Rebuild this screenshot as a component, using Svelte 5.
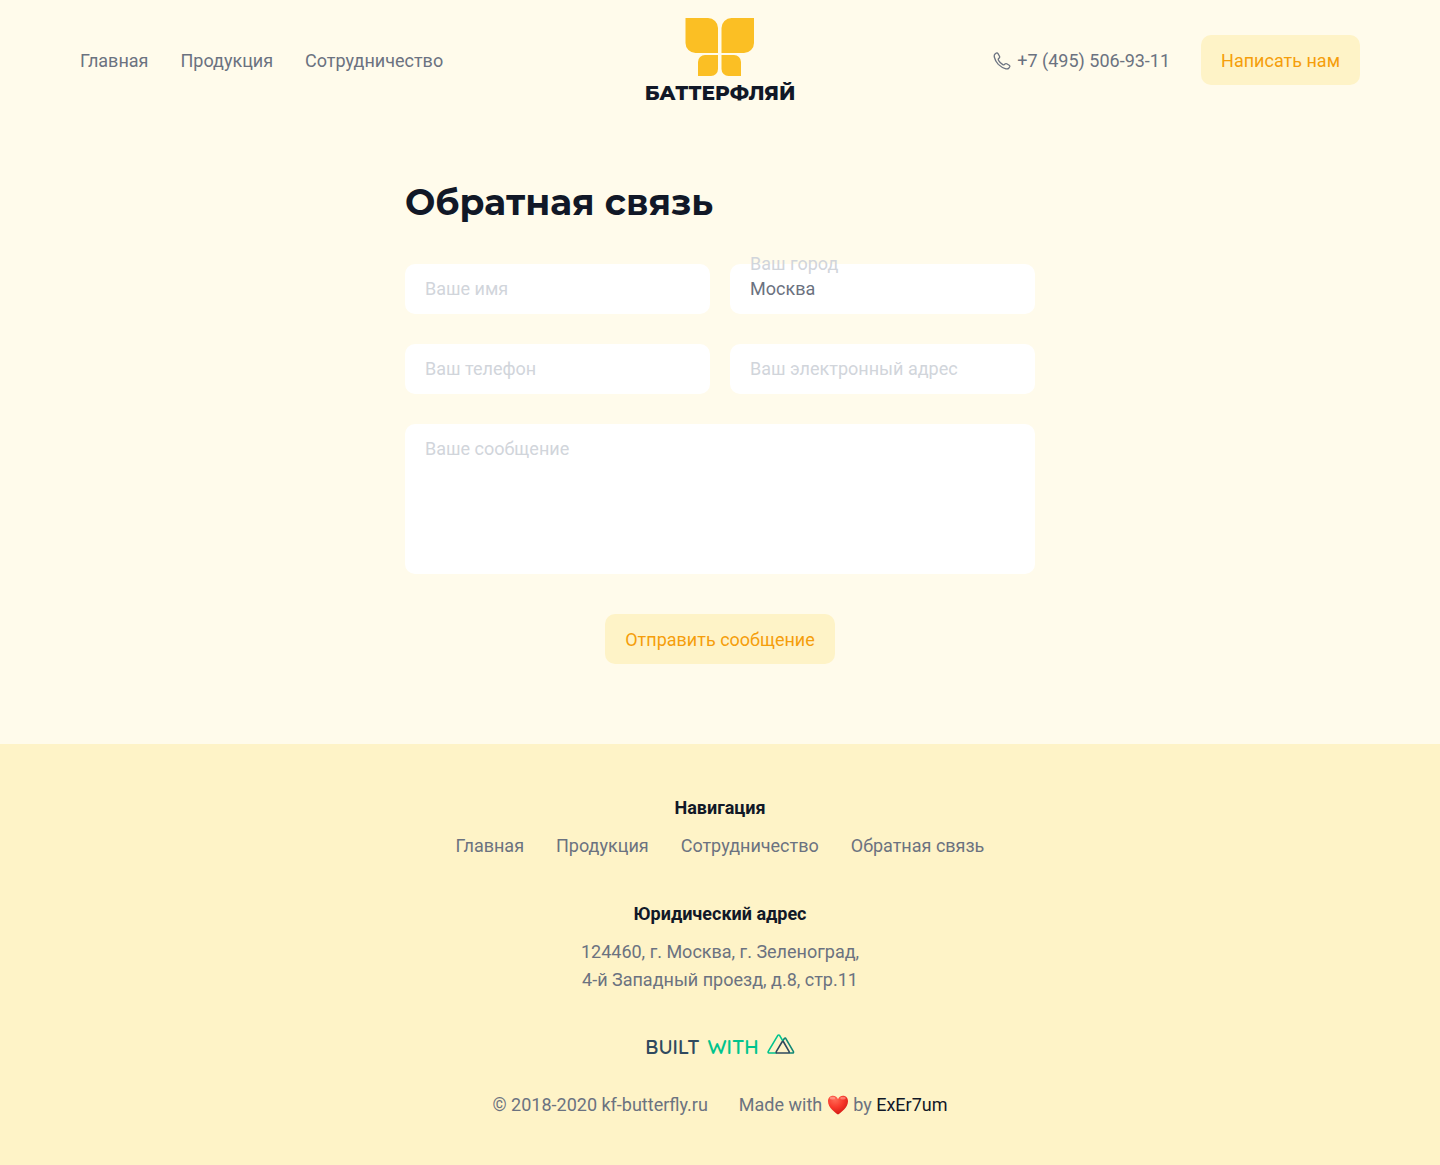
<script lang="ts">
	interface Link {
		href: string;
		title: string;
	}

	const links: Link[] = [
		{ href: '#home', title: 'Главная' },
		{ href: '#products', title: 'Продукция' },
		{ href: '#partnership', title: 'Сотрудничество' }
	];
	const footerLinks: Link[] = [...links, { href: '#feedback', title: 'Обратная связь' }];

	let fields = $state([
		{ id: 'name', label: 'Ваше имя', type: 'text', value: '' },
		{ id: 'city', label: 'Ваш город', type: 'text', value: 'Москва' },
		{ id: 'phone', label: 'Ваш телефон', type: 'tel', value: '' },
		{ id: 'email', label: 'Ваш электронный адрес', type: 'email', value: '' }
	]);
	let message = $state('');

	function submit(event: SubmitEvent) {
		event.preventDefault();
	}
</script>

<header class="header">
	<nav class="nav">
		{#each links as link}
			<a href={link.href}>{link.title}</a>
		{/each}
	</nav>

	<a class="logo" href="#home">
		<svg width="70" height="60" viewBox="0 0 70 60" aria-hidden="true">
			<g fill="#fbbf24">
				<path d="M.5 1H23A10 10 0 0 1 33 11V36H10.500A10 10 0 0 1 .5 26Z" />
				<path d="M69 1H46.500A10 10 0 0 0 36.500 11V36H59A10 10 0 0 0 69 26Z" />
				<path d="M33 38H20A7 7 0 0 0 13 45V59H26A7 7 0 0 0 33 52Z" />
				<path d="M36.500 38H49A7 7 0 0 1 56 45V59H43.500A7 7 0 0 1 36.500 52Z" />
			</g>
		</svg>
		<span class="logo__name">БАТТЕРФЛЯЙ</span>
	</a>

	<div class="contacts">
		<a class="phone" href="tel:+74955069311">
			<svg width="18" height="18" viewBox="0 0 18 18" aria-hidden="true">
				<path
					d="M1.800 2.200 3.300 1.100Q4.300.5 5 1.600L6.500 4.300Q7 5.300 6.200 6L5.500 6.700Q5 7.400 5.500 8.300Q7.100 11 9.800 12.600Q10.700 13.100 11.300 12.500L12 11.900Q12.800 11.300 13.700 11.800L16.200 13.200Q17.200 13.900 16.600 15L15.700 16.300Q14.800 17.300 13 16.800Q8.500 15.600 5.300 12.400Q2.300 9.200 1.300 5Q1 3.100 1.800 2.200Z"
				/>
			</svg>
			+7 (495) 506-93-11
		</a>
		<a class="button" href="#feedback">Написать нам</a>
	</div>
</header>

<main class="main">
	<h1>Обратная связь</h1>
	<form onsubmit={submit}>
		<div class="fields">
			{#each fields as field}
				<div class="field">
					<input id={field.id} type={field.type} bind:value={field.value} />
					<label for={field.id} class:floating={field.value !== ''}>{field.label}</label>
				</div>
			{/each}
			<div class="field field--wide">
				<textarea id="message" bind:value={message}></textarea>
				<label for="message" class:floating={message !== ''}>Ваше сообщение</label>
			</div>
		</div>
		<button class="button" type="submit">Отправить сообщение</button>
	</form>
</main>

<footer class="footer">
	<section>
		<h2>Навигация</h2>
		<nav class="nav">
			{#each footerLinks as link}
				<a href={link.href}>{link.title}</a>
			{/each}
		</nav>
	</section>

	<section>
		<h2>Юридический адрес</h2>
		<p>124460, г. Москва, г. Зеленоград,<br />4-й Западный проезд, д.8, стр.11</p>
	</section>

	<a class="built" href="#nuxt">
		<span>BUILT</span>
		<span class="built__with">WITH</span>
		<svg width="28" height="20" viewBox="0 0 28 20" aria-hidden="true">
			<g fill="none" stroke-width="1.600" stroke-linejoin="round" stroke-linecap="round">
				<path stroke="#108775" d="M15.800 6.800 17.400 4.500Q18.200 3.500 19 4.800L26.300 17.300Q27 19 25.500 19H22.500" />
				<path stroke="#00c48d" d="M9.300 19H2Q.6 18.700 1.300 17.300L10.700 1.600Q11.700.3 12.700 1.600L15.800 6.800" />
				<path stroke="#2f495e" d="M10 19Q8.700 18.700 9.400 17.300L15 8Q15.800 6.800 16.600 8L22 17.300Q22.700 18.800 21.300 19Z" />
			</g>
		</svg>
	</a>

	<div class="copyright">
		<span>© 2018-2020 kf-butterfly.ru</span>
		<span class="author">
			Made with
			<svg width="22" height="20" viewBox="0 0 22 20" role="img" aria-label="love">
				<defs>
					<radialGradient id="heart" cx="0.350" cy="0.200" r="0.850">
						<stop offset="0" stop-color="#ff6a55" />
						<stop offset="0.500" stop-color="#f8382b" />
						<stop offset="1" stop-color="#cf1713" />
					</radialGradient>
				</defs>
				<path
					fill="url(#heart)"
					d="M11 19.500C8 17.500 1 12.500 1 6.200C1 3 3.200.8 6 .8C8.400.8 10.200 2.200 11 4.200C11.800 2.200 13.600.8 16 .8C18.800.8 21 3 21 6.200C21 12.500 14 17.500 11 19.500Z"
				/>
				<ellipse cx="5.500" cy="3.200" rx="2.800" ry="1.400" fill="#ffa596" opacity="0.700" />
				<ellipse cx="16" cy="3.200" rx="2.800" ry="1.400" fill="#ffa596" opacity="0.600" />
			</svg>
			by <a href="#author">ExEr7um</a>
		</span>
	</div>
</footer>

<style>
	:global(body) {
		background: #fffbeb;
		color: #6b7280;
		font-family: Roboto, 'Liberation Sans', sans-serif;
		font-size: 18px;
		line-height: 28px;
	}

	a {
		color: inherit;
		text-decoration: none;
	}

	h1,
	h2,
	p {
		margin: 0;
	}

	.header {
		display: grid;
		grid-template-columns: 1fr auto 1fr;
		align-items: center;
		padding: 17px 80px 15px;
	}

	.nav {
		display: flex;
		justify-content: center;
		gap: 32px;
	}

	.header .nav {
		justify-content: flex-start;
	}

	.logo {
		display: flex;
		flex-direction: column;
		align-items: center;
		gap: 4px;
		color: #111827;
	}

	.logo__name {
		font-family: Montserrat, Inter, sans-serif;
		font-size: 20px;
		font-weight: 800;
		line-height: 24px;
	}

	.contacts {
		display: flex;
		align-items: center;
		justify-content: flex-end;
		gap: 31px;
	}

	.phone {
		display: flex;
		align-items: center;
		gap: 6px;
	}

	.phone path {
		fill: none;
		stroke: currentColor;
		stroke-width: 1.3;
	}

	.button {
		padding: 12px 20px 10px;
		border: 0;
		border-radius: 10px;
		background: #fef3c7;
		color: #f59e0b;
		font: inherit;
		cursor: pointer;
	}

	.header .button {
		margin-bottom: 2px;
	}

	.main {
		max-width: 630px;
		margin: 0 auto;
		padding: 60px 20px 80px;
	}

	h1 {
		margin-bottom: 40px;
		color: #111827;
		font-family: Montserrat, Inter, sans-serif;
		font-size: 36px;
		font-weight: 700;
		line-height: 44px;
	}

	form {
		display: flex;
		flex-direction: column;
		align-items: center;
		gap: 40px;
	}

	.fields {
		display: grid;
		grid-template-columns: 1fr 1fr;
		gap: 30px 20px;
		width: 100%;
	}

	.field {
		position: relative;
		display: flex;
	}

	.field--wide {
		grid-column: 1 / -1;
	}

	input,
	textarea {
		box-sizing: border-box;
		width: 100%;
		height: 50px;
		padding: 10px 20px 12px;
		border: 0;
		border-radius: 10px;
		background: #ffffff;
		color: inherit;
		font: inherit;
	}

	textarea {
		height: 150px;
		resize: none;
	}

	label {
		position: absolute;
		top: 11px;
		left: 20px;
		color: #d1d5db;
		pointer-events: none;
		transition: top 0.2s;
	}

	label.floating,
	input:focus + label,
	textarea:focus + label {
		top: -14px;
	}

	.footer {
		display: flex;
		flex-direction: column;
		align-items: center;
		gap: 40px;
		padding: 50px 20px 49px;
		background: #fef3c7;
		text-align: center;
	}

	h2 {
		margin-bottom: 10px;
		color: #111827;
		font-size: 18px;
		font-weight: 700;
		line-height: 28px;
	}

	.built {
		display: flex;
		align-items: center;
		gap: 8px;
		height: 20px;
		color: #2f495e;
		font-family: Quicksand, Lato, sans-serif;
		font-size: 20px;
		font-weight: 600;
	}

	.built span {
		padding-top: 6px;
	}

	.built .built__with {
		color: #00c48d;
	}

	.copyright {
		display: flex;
		gap: 31px;
		line-height: 22px;
	}

	.author svg {
		vertical-align: -4px;
	}

	.author a {
		color: #111827;
	}
</style>
